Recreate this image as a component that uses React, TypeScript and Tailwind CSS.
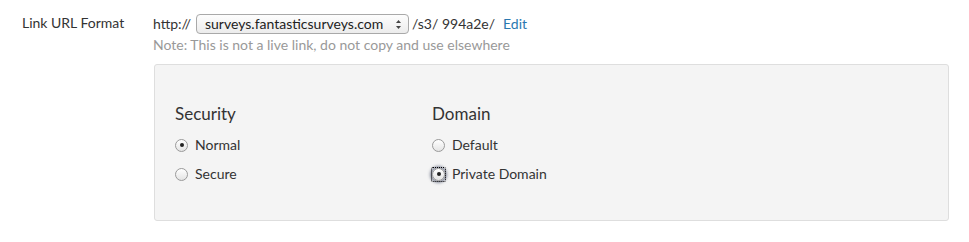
import React from "react";

function Radio({ checked, focus }: { checked?: boolean; focus?: boolean }) {
  return (
    <span
      className={
        "relative inline-flex w-[13px] h-[13px] rounded-full border border-[#9a9a9a] bg-gradient-to-b from-[#ffffff] to-[#e4e4e4] items-center justify-center shrink-0 " +
        (focus ? "shadow-[0_0_3px_2px_rgba(40,50,80,0.55)]" : "")
      }
    >
      {checked && <span className="w-[4px] h-[4px] rounded-full bg-[#222]" />}
      {focus && (
        <span className="absolute -inset-[2px] border border-dotted border-black rounded-[2px]" />
      )}
    </span>
  );
}

export default function App() {
  return (
    <div className="w-[969px] h-[242px] bg-white text-[#333] font-['Lato','Open_Sans',sans-serif] text-[14px] leading-none">
      <div className="flex pt-[13px] pl-[22px]">
        <div className="w-[131px] pt-[3px] text-[#333]">Link URL Format</div>
        <div className="flex flex-col">
          <div className="flex items-center h-[22px]">
            <span className="w-[43px]">http://</span>
            <span className="flex items-center w-[213px] h-[20px] rounded-[4px] border border-[#a9a9a9] bg-gradient-to-b from-[#fdfdfd] to-[#ececec] pl-[8px] pr-[6px] text-[#222]">
              <span className="flex-1">surveys.fantasticsurveys.com</span>
              <svg width="7" height="11" viewBox="0 0 7 11">
                <path d="M3.5 1 L6 4 H1 Z" fill="#444" />
                <path d="M3.5 10 L6 7 H1 Z" fill="#444" />
              </svg>
            </span>
            <span className="ml-[3px]">/s3/ 994a2e/</span>
            <span className="ml-[8px] text-[#2a78b0]">Edit</span>
          </div>
          <div className="mt-[3px] text-[#999]">Note: This is not a live link, do not copy and use elsewhere</div>
          <div className="mt-[12px] ml-[1px] w-[795px] h-[157px] bg-[#f4f4f4] border border-[#dedede] rounded-[3px] pl-[20px] pt-[40px] flex">
            <div className="w-[257px] flex flex-col">
              <div className="text-[17px] text-[#333]">Security</div>
              <div className="mt-[16px] flex items-center gap-[7px]">
                <Radio checked />
                <span>Normal</span>
              </div>
              <div className="mt-[15px] flex items-center gap-[7px]">
                <Radio />
                <span>Secure</span>
              </div>
            </div>
            <div className="flex flex-col">
              <div className="text-[17px] text-[#333]">Domain</div>
              <div className="mt-[16px] flex items-center gap-[7px]">
                <Radio />
                <span>Default</span>
              </div>
              <div className="mt-[15px] flex items-center gap-[7px]">
                <Radio checked focus />
                <span>Private Domain</span>
              </div>
            </div>
          </div>
        </div>
      </div>
    </div>
  );
}
